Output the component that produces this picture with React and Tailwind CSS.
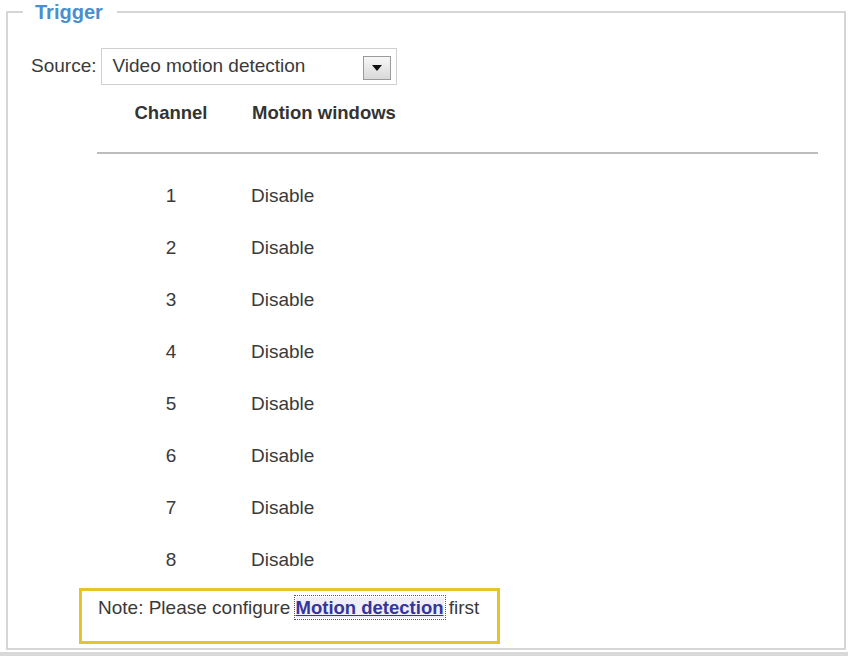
import React from 'react';

const channels = [1, 2, 3, 4, 5, 6, 7, 8];

const SourceSelect = () => (
  <div className="w-[296px] h-[37px] border border-[#d0d0d0] bg-white flex items-center justify-between pl-[10px] pr-[5px]">
    <span className="text-[19px] text-[#3a3a3a]">Video motion detection</span>
    {/* botón del desplegable */}
    <div className="w-[28px] h-[24px] mt-[2px] border border-[#9a9a9a] bg-gradient-to-b from-[#f7f7f7] to-[#d9d9d9] flex items-center justify-center">
      <svg width="10" height="6" viewBox="0 0 10 6">
        <path d="M0 0 L10 0 L5 6 Z" fill="#111" />
      </svg>
    </div>
  </div>
);

const App = () => {
  return (
    <div
      className="w-[848px] h-[656px] bg-white flex flex-col overflow-hidden"
      style={{ fontFamily: '"Liberation Sans", Arial, sans-serif' }}
    >
      <div className="h-[652px] pl-[6px] pr-[2px]">
        <fieldset className="h-[650px] border-2 border-[#d6d6d6] pl-[15px] pr-[15px]">
          <legend className="pl-[12px] pr-[14px] text-[20px] leading-[24px] font-bold text-[#4a8fcb]">
            Trigger
          </legend>

          {/* Source */}
          <div className="mt-[24px] pl-[8px] flex items-center gap-[5px]">
            <span className="text-[19px] text-[#3a3a3a]">Source:</span>
            <SourceSelect />
          </div>

          {/* Tabla de canales */}
          <div className="ml-[74px] w-[721px]">
            <div className="mt-[16px] flex text-[18.5px] leading-[24px] font-bold text-[#333]">
              <div className="w-[148px] text-center">Channel</div>
              <div className="pl-[7px]">Motion windows</div>
            </div>
            <div className="mt-[27px] h-[2px] bg-[#bdbdbd]" />
            <div className="mt-[16px]">
              {channels.map((ch) => (
                <div key={ch} className="h-[52px] flex items-center text-[19px] text-[#3a3a3a]">
                  <div className="w-[148px] text-center">{ch}</div>
                  <div className="pl-[6px]">Disable</div>
                </div>
              ))}
            </div>
          </div>

          {/* Nota */}
          <div className="mt-[2px] ml-[56px] w-[421px] h-[56px] border-[3px] border-[#e3c62c] pl-[16px] pt-[5px] text-[19px] leading-[24px] text-[#3a3a3a]">
            Note: Please configure{' '}
            <a
              href="#"
              className="font-bold text-[18.5px] text-[#35359a] underline bg-[#efeef9] outline-1 outline-dotted outline-[#555] outline-offset-[1px]"
            >
              Motion detection
            </a>{' '}
            first
          </div>
        </fieldset>
      </div>
      <div className="h-[4px] bg-[#d9d9d9]" />
    </div>
  );
};

export default App;
